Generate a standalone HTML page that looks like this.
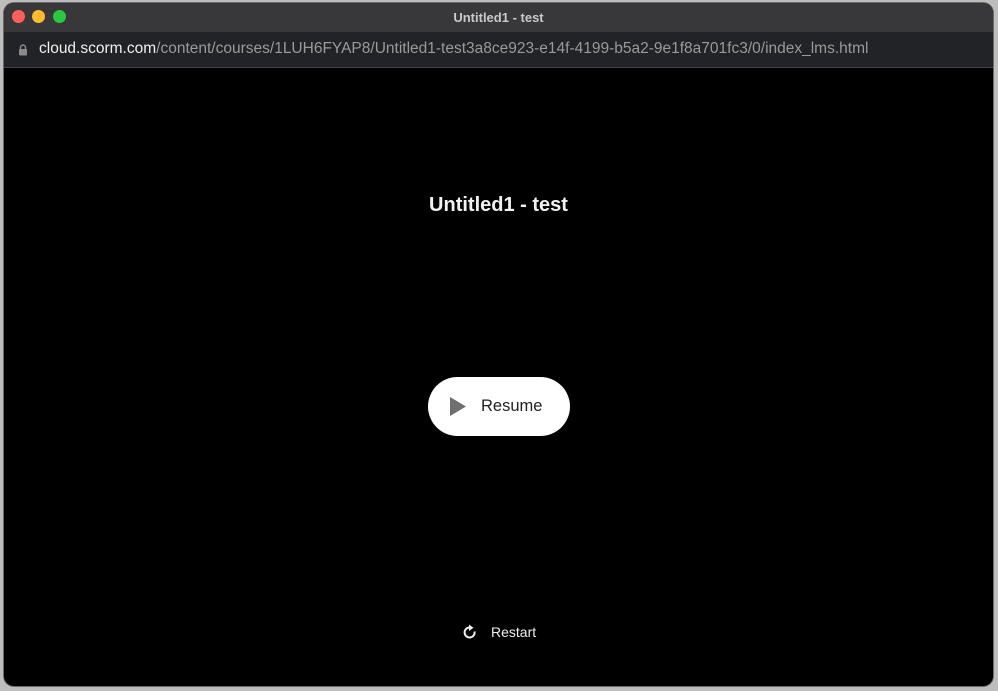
<!DOCTYPE html>
<html><head><style>
html,body{margin:0;padding:0;width:998px;height:691px;background:#bdbdbd;overflow:hidden;font-family:"Liberation Sans",sans-serif}
.win{position:absolute;left:4px;top:3px;width:989px;height:683px;border-radius:10px;overflow:hidden;background:#000;box-shadow:0 0 0 1px #6a6a6a}
.tb{position:absolute;left:0;top:0;right:0;height:29px;background:#38383a}
.dot{position:absolute;top:7px;width:13px;height:13px;border-radius:50%}
.title{position:absolute;left:0;right:0;top:7px;text-align:center;color:#c9c9c9;font-size:13px;font-weight:bold}
.ub{position:absolute;left:0;right:0;top:29px;height:35px;background:#222326;border-bottom:1px solid #444}
.url{position:absolute;left:35px;top:8px;font-size:15.5px;color:#9a9a9a;white-space:nowrap}
.url b{color:#f0f0f0;font-weight:normal}
.h{position:absolute;left:0;right:0;top:191px;text-align:center;color:#f2f2f2;font-size:20px;font-weight:bold}
.btn{position:absolute;left:424px;top:374px;width:142px;height:59px;border-radius:30px;background:#fff}
.btn span{position:absolute;left:53px;top:20px;font-size:16.5px;color:#222}
.rs{position:absolute;left:487px;top:621px;color:#f0f0f0;font-size:14px}
</style></head><body>
<div class="win">
<div class="tb">
<div class="dot" style="left:8px;background:#fe5f57"></div>
<div class="dot" style="left:28px;background:#febc2e"></div>
<div class="dot" style="left:49px;background:#28c840"></div>
<div class="title">Untitled1 - test</div>
</div>
<div class="ub">
<svg style="position:absolute;left:14px;top:12px" width="10" height="12" viewBox="0 0 10 12"><path d="M2.5 5V3.5a2.5 2.5 0 0 1 5 0V5" stroke="#8a8a8a" stroke-width="1.4" fill="none"/><rect x="1" y="5" width="8" height="6.5" rx="1" fill="#8a8a8a"/></svg>
<div class="url"><b>cloud.scorm.com</b>/content/courses/1LUH6FYAP8/Untitled1-test3a8ce923-e14f-4199-b5a2-9e1f8a701fc3/0/index_lms.html</div>
</div>
<div class="h">Untitled1 - test</div>
<div class="btn"><svg style="position:absolute;left:22px;top:20px" width="16" height="19"><path d="M0 0L16 9.5L0 19Z" fill="#6f6f6f"/></svg><span>Resume</span></div>
<svg style="position:absolute;left:458px;top:621px" width="16" height="17" viewBox="0 0 16 17"><path d="M12.5 7.5A5 5 0 1 1 8 3.5" stroke="#f0f0f0" stroke-width="2" fill="none"/><path d="M7 0.5L11.5 3.8L7 7Z" fill="#f0f0f0"/></svg>
<div class="rs">Restart</div>
</div>
</body></html>
